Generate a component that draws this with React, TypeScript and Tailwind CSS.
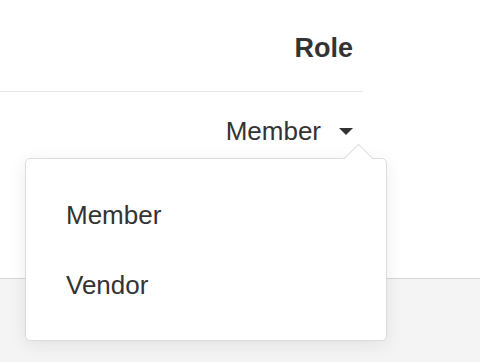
import React from "react";

const items = ["Member", "Vendor"];

const App = () => {
  return (
    <div className="relative w-[480px] h-[362px] overflow-hidden bg-[#f4f4f4] font-['Liberation_Sans',Arial,sans-serif] text-[#333]">
      {/* Page content */}
      <div className="h-[279px] bg-white border-b border-[#d6d6d6]">
        <div className="w-[363px]">
          {/* Table header */}
          <div className="h-[92px] flex items-center justify-end pr-[10px] pt-[5px] border-b border-[#e6e6e6]">
            <span className="text-[27px] font-bold">Role</span>
          </div>
          {/* Table row */}
          <div className="h-[78px] flex items-center justify-end pr-[10px] gap-[18px]">
            <span className="text-[26px]">Member</span>
            <span className="block w-0 h-0 border-l-[7px] border-r-[7px] border-t-[7px] border-l-transparent border-r-transparent border-t-[#333]" />
          </div>
        </div>
      </div>

      {/* Dropdown menu */}
      <div className="absolute left-[25px] top-[158px] w-[362px] h-[183px] bg-white border border-[#dcdcdc] rounded-[5px] shadow-[0_4px_18px_rgba(0,0,0,0.08)]">
        <div className="absolute left-[322px] -top-[11px] w-[21px] h-[21px] rotate-45 bg-white border-l border-t border-[#dcdcdc]" />
        <div className="relative pt-[21px]">
          {items.map((item) => (
            <div key={item} className="h-[70px] flex items-center pl-[40px] text-[26px]">
              {item}
            </div>
          ))}
        </div>
      </div>
    </div>
  );
};

export default App;
